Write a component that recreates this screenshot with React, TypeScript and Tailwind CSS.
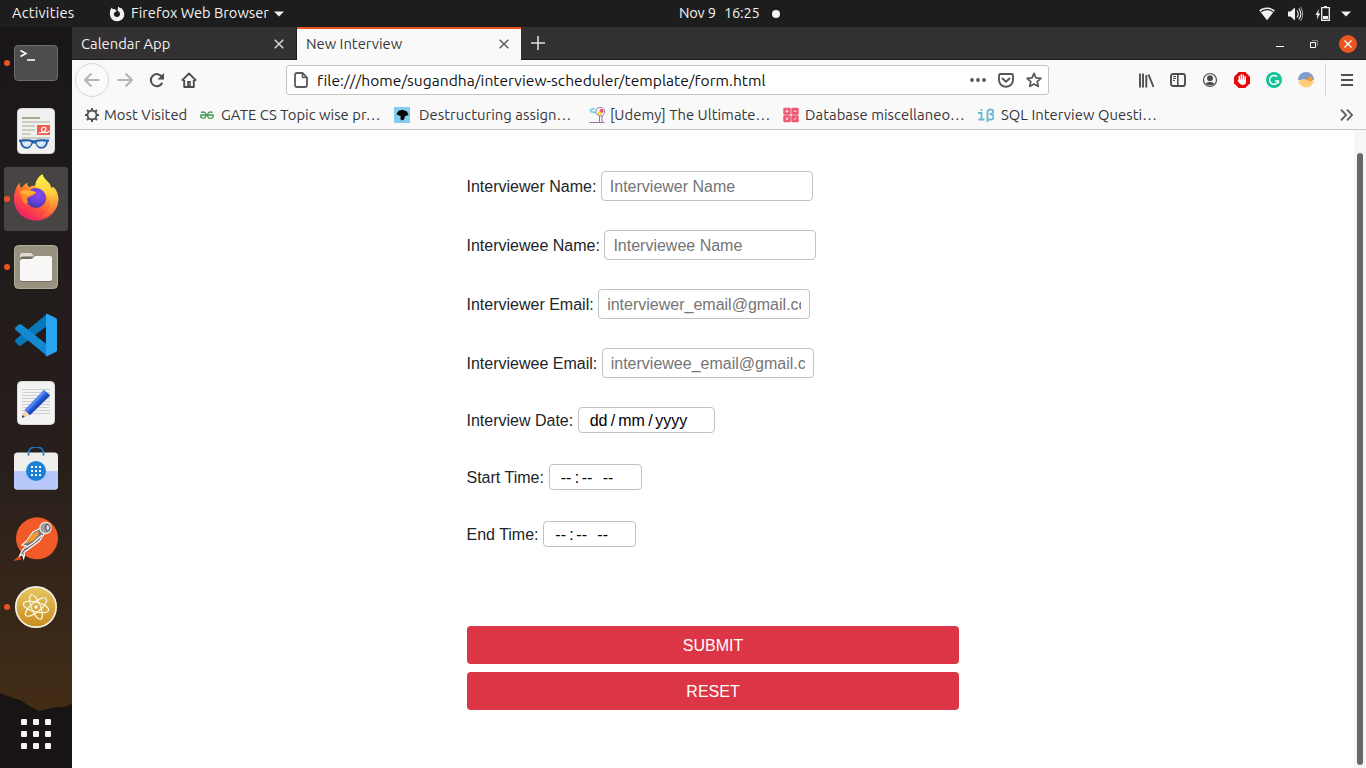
import React from "react";

type DrawProps = { box: string; w: number; h: number; children: React.ReactNode; className?: string };

function Draw({ box, w, h, children, className = "" }: DrawProps) {
  return (
    <svg viewBox={box} width={w} height={h} className={"block shrink-0 " + className} fill="none">
      {children}
    </svg>
  );
}

function TopBar() {
  return (
    <header className="flex h-[27px] shrink-0 items-center bg-[#1d1d1d] text-[14.667px] leading-[25px] text-[#f2f2f2]">
      <span className="ml-3 w-[97px] whitespace-nowrap pb-[2px] tracking-[0.22px]">Activities</span>
      <Draw box="0 0 16 16" w={16} h={16}>
        <path d="M1.2 4.5 2.6 1.6l1.3 1.7L5.8 3l2 2.3-1.7.8-1.4 1.6C4.8 10 6.3 11 8 11c2 0 3.2-1.5 3-3.3-.2-1.500-1.300-2.300-2.500-2.900L9.200.6l2 1.700 1.300-.2 1.800 2.600c2 3.700.8 7.400-2.200 9.400-3.400 2.200-8 1.300-10-2C.8 9.900.6 7 1.200 4.500Z" fill="#f2f2f2" />
      </Draw>
      <span className="ml-[6px] w-[143px] whitespace-nowrap pb-[2px]">Firefox Web Browser</span>
      <Draw box="0 0 10 6" w={10} h={6}><path d="M0 .5h10L5 5.500Z" fill="#f2f2f2" /></Draw>
      <span className="ml-[395px] w-[45px] whitespace-nowrap pb-[2px] tracking-[-0.200px]">Nov 9</span>
      <span className="w-[48px] whitespace-nowrap pb-[2px] tracking-[-0.250px]">16:25</span>
      <span className="size-2 rounded-full bg-[#f2f2f2]" />
      <div className="mr-[15px] ml-auto flex items-center">
        <Draw box="1259 6 16 14" w={16} h={14}>
          <path d="M1259.200 9.300c4.500-3.700 11.100-3.700 15.600 0L1267 19.300Z" fill="#f2f2f2" />
          <path d="M1261 10.700c3.500-2.800 8.500-2.800 12 0" stroke="#1d1d1d" strokeWidth="1.100" />
        </Draw>
        <Draw box="1287 5 17 16" w={17} h={16} className="ml-3">
          <path d="M1288 10.500h2.500l4.500-4v13l-4.500-4h-2.500Z" fill="#f2f2f2" />
          <path d="M1297 9.500q2.500 3.500 0 7M1298.800 7.500q4.200 5.500 0 11" stroke="#f2f2f2" strokeWidth="1.100" />
          <path d="M1300.500 6q4.500 7 0 14" stroke="#a0a0a0" strokeWidth="1" />
        </Draw>
        <Draw box="1315 4 16 17" w={16} h={17} className="ml-[11px]">
          <path d="M1319 8l-3.500 6h2l-.7 4.500 3.500-6h-2Z" fill="#f2f2f2" />
          <path d="M1321.700 6.700h7.600v12.600h-7.600Z" stroke="#f2f2f2" strokeWidth="1.300" />
          <path d="M1324 5h3v1.500h-3ZM1323 15h5v3h-5Z" fill="#f2f2f2" />
        </Draw>
        <Draw box="0 0 10 6" w={10} h={6} className="ml-[10px]"><path d="M0 .5h10L5 5.500Z" fill="#f2f2f2" /></Draw>
      </div>
    </header>
  );
}

function DockItem({ running = false, active = false, children }: { running?: boolean; active?: boolean; children: React.ReactNode }) {
  return (
    <div className={"relative flex size-16 shrink-0 items-center justify-center rounded-[3px] " + (active ? "bg-[#484444]" : "")}>
      {running && <span className="absolute top-[29px] left-0 size-[6px] rounded-full bg-[#e95420]" />}
      {children}
    </div>
  );
}

function Dock() {
  return (
    <nav className="relative flex w-[72px] shrink-0 flex-col items-center gap-1 bg-linear-to-b from-[#19161a] via-[#281f1c] via-60% to-[#4a3012] pt-1">
      <svg className="absolute bottom-0 left-0" width="72" height="76" viewBox="0 0 72 76" fill="none">
        <path d="M0 1 10 5 20 8 31 15 39 19 56 15 63 15 72 12V76H0Z" fill="#191414" />
      </svg>
      <DockItem running>
        <Draw box="13 44 46 38" w={46} h={38}>
          <rect x="14.500" y="45.500" width="43" height="35" rx="3.500" fill="#4d4d4d" stroke="#6d6d6d" />
          <path d="M20.500 50.500 26 53.500l-5.500 3" stroke="#fff" strokeWidth="1.500" />
          <path d="M27 60h8" stroke="#fff" strokeWidth="1.600" />
        </Draw>
      </DockItem>
      <DockItem>
        <Draw box="17 108 38 46" w={38} h={46}>
          <rect x="17.500" y="108.500" width="37" height="45" rx="4" fill="#f0f0ef" stroke="#d8d8d6" />
          <path d="M22 118h18" stroke="#aaa68f" strokeWidth="2" />
          <path d="M22 122h28M22 126h13M22 130h13M22 134h9M22 138h28" stroke="#c3c0b4" strokeWidth="1.600" />
          <rect x="37" y="125" width="13" height="10" fill="#f25c4c" />
          <path d="M38.500 133c3.500 0 8-2 7.500-4.500-.5-2-4.500-1.500-4.500 1 0 4 5 4 8 1.500" stroke="#fff" strokeWidth="1.200" />
          <path d="M19 139.800c4-.8 11-.8 14 .5h2c3-1.300 10-1.300 14-.5v1.700l-1.200.8c-.8 7.700-10.300 9-12.300 1.200h-3c-2 7.800-11.500 6.500-12.300-1.200l-1.200-.8Z" fill="#205fae" />
          <path d="M21.800 141.800c3-.7 7-.7 9.700.2-.5 6.500-8.700 7-9.700-.2ZM36.500 142c2.700-.9 6.700-.9 9.700-.2-1 7.200-9.200 6.700-9.700.2Z" fill="#d3e3f2" />
          <path d="m24.500 145.500 4-3.500M39 145.500l4-3.500" stroke="#fff" />
        </Draw>
      </DockItem>
      <DockItem running active>
        <Draw box="12 173 48 50" w={48} h={50} className="-mt-1">
          <defs>
            <linearGradient id="ffBody" x1="50" y1="178" x2="22" y2="218" gradientUnits="userSpaceOnUse">
              <stop offset="0" stopColor="#fff04a" /><stop offset=".35" stopColor="#ffa52b" /><stop offset=".65" stopColor="#ff553c" /><stop offset="1" stopColor="#ee1b68" />
            </linearGradient>
            <linearGradient id="ffTail" x1="46" y1="175" x2="50" y2="214" gradientUnits="userSpaceOnUse">
              <stop offset="0" stopColor="#fff44f" /><stop offset=".5" stopColor="#ffcf3b" /><stop offset="1" stopColor="#ff6a3a" />
            </linearGradient>
            <radialGradient id="ffGlobe" cx="38" cy="196" r="13" gradientUnits="userSpaceOnUse">
              <stop offset="0" stopColor="#8a4cf5" /><stop offset=".6" stopColor="#6a40d8" /><stop offset="1" stopColor="#453ba8" />
            </radialGradient>
          </defs>
          <path d="M20 183.500c-.3 3 .2 4.500 1.500 5.500 2-2.500 3.800-4.200 6-5.500-.3 2 .2 3.500 1.500 4.500 12-4 25-2 27.500 7l2 4c0 13-10 22.500-22.500 22.500S13.500 212 14 199c.1-6 2.500-12 6-15.500Z" fill="url(#ffBody)" />
          <path d="M42.500 175c1 4 4 6 6.500 9 1.500 1.800 2 3.500 2 5l2.500-1c3.500 3.500 5 8 4.700 12-.7 9-7 16.500-16.200 18 6-4 9-10 7-18-2-6-9-9-13.500-11.500-.8-6 2.500-10.500 7-13.500Z" fill="url(#ffTail)" />
          <circle cx="36" cy="199" r="10" fill="url(#ffGlobe)" />
          <path d="M19.500 193c4-2.500 8-2 11.500-1 2 .7 4 1 5 1.500-1 2.500-4 3.500-7 4.500-2.500 1-2 4-.5 5-2 1-3 1.500-2 3-4-2-5-8-7-13Z" fill="#ff8a2b" />
          <path d="M19.500 193c4-3 10-2.500 16.500.3-2 2-5 2.200-8 3.200" fill="#ffb135" />
        </Draw>
      </DockItem>
      <DockItem running>
        <Draw box="13 244 46 46" w={46} h={46}>
          <rect x="14.500" y="245.500" width="43" height="43" rx="4" fill="#979180" stroke="#b3ad9c" />
          <path d="M20 255q0-2 2-2h9l3 3v8H20Z" fill="#dedacf" />
          <rect x="20" y="256.500" width="32" height="25.500" rx="2.500" fill="#726d60" />
          <path d="M20 261q0-2 2-2h8.500q2 0 3.500-2 .8-1 2-1h14q2 0 2 2v21q0 2-2 2H22q-2 0-2-2Z" fill="#f9f8f6" />
        </Draw>
      </DockItem>
      <DockItem>
        <Draw box="14 313 44 44" w={44} h={44}>
          <path d="M15.500 339.500q-1 1.500.2 2.800l2.700 2.900q1.600 1 3 .1L47 326v-12Z" fill="#0877b9" />
          <path d="M15.500 330q-1-1.500.2-2.800l2.700-2.500q1.600-1 3-.1L47 344.500V356Z" fill="#1289d0" />
          <path d="M45.500 314q1-.3 2 .1l8.300 4q1.200.7 1.200 2v30q0 1.300-1.200 2l-8.300 4q-1 .4-2 .1l.5-.7V314.500Z" fill="#29a4ee" />
        </Draw>
      </DockItem>
      <DockItem>
        <Draw box="17 380 38 46" w={38} h={46}>
          <rect x="17.500" y="381.500" width="37" height="43" rx="4" fill="#f3f3f3" stroke="#dadada" />
          <path d="M22 389.500h28M22 392.500h28M22 395.500h28M22 398.500h28M22 401.500h28M22 404.500h28M22 407.500h28M22 410.500h28M22 413.500h28" stroke="#cfcfcf" />
          <path d="m24.500 410-2.500 8 8-3.300Z" fill="#f4d4b2" />
          <path d="m22.800 415-1 3 3-1.200Z" fill="#333" />
          <path d="m24.500 410 19.500-20 6 5-20 20Z" fill="#2e63df" />
          <path d="m25 410 19-20 2 1.600-19 19.800Z" fill="#5789f3" />
          <path d="m28 413.500 19-19.800 3 2L30 415Z" fill="#1f4cba" />
        </Draw>
      </DockItem>
      <DockItem>
        <Draw box="13 449 46 48" w={46} h={48}>
          <path d="M28.500 456v-1c0-8.200 15-8.200 15 0v1" stroke="#1b78cb" strokeWidth="1.700" />
          <rect x="14" y="454.500" width="44" height="37" rx="3.500" fill="#eeeeed" />
          <path d="M14 473h44v15.500q0 3-3 3H17q-3 0-3-3Z" fill="#b7c9fa" />
          <path d="M28.500 457.500v-3M43.500 457.500v-3" stroke="#1b78cb" strokeWidth="1.700" />
          <circle cx="36" cy="473" r="10" fill="#1c80d6" />
          <path d="M31 469h2m2 0h2m2 0h2M31 473h2m2 0h2m2 0h2M31 477h2m2 0h2m2 0h2" stroke="#fff" strokeWidth="2" />
        </Draw>
      </DockItem>
      <DockItem>
        <Draw box="12 515 48 48" w={48} h={48}>
          <circle cx="37" cy="538.300" r="21" fill="#f15a29" />
          <path d="m13 561 7-6 1.500 4.500Z" fill="#dc4a20" />
          <path d="M40 528.500 33 532l-6.500 9L22 545l4 .8-4 5-2.500 5 3-1.300 1.200 4 .8-3.500-.5-2.500 7.500-5.500 8-6 4.500-7Z" fill="#77757b" stroke="#fff" strokeWidth="1.100" />
          <path d="m38.500 531-5.500 2.500-8 10.500 8.500-3.500 5-5.500Z" fill="#f59a2d" />
          <path d="m42 535-9 8-7 4.500" stroke="#fff" strokeWidth="1.100" />
          <circle cx="45.500" cy="528" r="5.600" fill="#9d9ca1" stroke="#ececec" strokeWidth="1.200" />
          <path d="M46 524.500q4.500 0 4 3.500-.5 3.500-3 3.500-2-3 -1-7Z" fill="#d8d8d8" stroke="#333" strokeWidth=".9" />
        </Draw>
      </DockItem>
      <DockItem running>
        <Draw box="14 585 44 44" w={44} h={44}>
          <defs>
            <linearGradient id="atomFill" x1="0" y1="0" x2="0" y2="1">
              <stop offset="0" stopColor="#e8c765" /><stop offset="1" stopColor="#c98c1d" />
            </linearGradient>
          </defs>
          <circle cx="36" cy="607" r="20.200" fill="url(#atomFill)" stroke="#f1eee4" strokeWidth="1.700" />
          <g stroke="#f7f8df" strokeWidth="1.200">
            <ellipse cx="36" cy="607" rx="13" ry="4.800" transform="rotate(15 36 607)" />
            <ellipse cx="36" cy="607" rx="13" ry="4.600" transform="rotate(69 36 607)" />
            <ellipse cx="36" cy="607" rx="13.200" ry="4.800" transform="rotate(-40 36 607)" />
          </g>
          <circle cx="36" cy="607" r="1.700" fill="#f7f8df" />
        </Draw>
      </DockItem>
      <div className="relative mt-auto mb-[19px] grid grid-cols-3 gap-[6px]">
        {Array.from({ length: 9 }, (_, i) => (
          <span key={i} className="size-[6px] rounded-[1px] bg-[#f2f2f2]" />
        ))}
      </div>
    </nav>
  );
}

function CloseGlyph({ color }: { color: string }) {
  return (
    <Draw box="0 0 10 10" w={10} h={10}><path d="m.7.7 8.600 8.600M9.300.7.7 9.300" stroke={color} strokeWidth="1.500" /></Draw>
  );
}

function TabStrip() {
  return (
    <div className="flex h-[33px] shrink-0 border-b border-[#1b1a1b] bg-[#333031] text-[14.800px]">
      <div className="flex w-[225px] items-center justify-between border-r border-[#1b1a1b] pt-[2px] pr-3 pl-[9px] text-[#f0f0f0]">
        <span className="whitespace-nowrap">Calendar App</span>
        <CloseGlyph color="#d6d6d6" />
      </div>
      <div className="-mb-px flex w-[224px] items-center justify-between border-t-2 border-[#e95420] bg-[#f9f9fa] pr-3 pb-px pl-[9px] text-[#3a3a3c]">
        <span className="whitespace-nowrap">New Interview</span>
        <CloseGlyph color="#5c5c5c" />
      </div>
      <div className="flex items-center pl-[10px]">
        <Draw box="0 0 14 14" w={14} h={14}><path d="M7 0v14M0 7h14" stroke="#dedede" strokeWidth="1.600" /></Draw>
      </div>
      <div className="mr-[9px] ml-auto flex items-center pt-[2px]">
        <Draw box="0 0 8 8" w={8} h={8}><path d="M0 6.500h8" stroke="#fff" /></Draw>
        <Draw box="0 0 8 8" w={8} h={8} className="ml-[26px]">
          <path d="M2 .5h5.500V6" stroke="#858385" /><path d="M.5 2.500h5v5h-5Z" stroke="#fff" />
        </Draw>
        <span className="ml-[21px] flex size-[18px] items-center justify-center rounded-full bg-[#e95420]">
          <Draw box="0 0 8 8" w={8} h={8}><path d="m.5.5 7 7m0-7-7 7" stroke="#fff" strokeWidth="1.300" /></Draw>
        </span>
      </div>
    </div>
  );
}

function Toolbar() {
  return (
    <div className="flex h-10 shrink-0 items-center pl-[3px]">
      <span className="flex size-[34px] items-center justify-center rounded-full border border-[#d5d5d6] bg-[#fafafa]">
        <Draw box="0 0 16 16" w={16} h={16}><path d="M15.500 8H1.500M7.500 1.500 1 8l6.500 6.500" stroke="#b4b4b5" strokeWidth="2" /></Draw>
      </span>
      <Draw box="0 0 16 16" w={16} h={16} className="ml-2"><path d="M.5 8h14M8.500 1.500 15 8l-6.500 6.500" stroke="#b4b4b5" strokeWidth="2" /></Draw>
      <Draw box="0 0 16 16" w={16} h={16} className="ml-4">
        <path d="M13.300 10.700A6 6 0 1 1 13 5" stroke="#4d4d4f" strokeWidth="2" /><path d="M15 1v6.500H8.500Z" fill="#4d4d4f" />
      </Draw>
      <Draw box="0 0 16 16" w={16} h={16} className="ml-4">
        <path d="M.8 8.700 8 1.500l7.200 7.200M3.200 8v7h9.600V8" stroke="#4d4d4f" strokeWidth="1.900" strokeLinejoin="round" />
        <path d="M6.200 15V9h3.600v6" fill="#4d4d4f" /><path d="M8 12h1" stroke="#f9f9fa" />
      </Draw>
      <div className="ml-[89px] flex h-[30px] w-[763px] items-center rounded-[3px] border border-[#c3c3c4] bg-white pl-[7px]">
        <Draw box="0 0 14 16" w={14} h={16}>
          <path d="M3 1h5.500L13 5.500V13q0 2-2 2H3q-2 0-2-2V3q0-2 2-2Z" stroke="#5a5a5c" strokeWidth="1.800" /><path d="M8.500 1v4.500H13" stroke="#5a5a5c" strokeWidth="1.500" />
        </Draw>
        <span className="ml-[9px] w-[653px] pt-[2px] text-[15.600px] whitespace-nowrap tracking-[0.018px] text-[#111]">file:///home/sugandha/interview-scheduler/template/form.html</span>
        <Draw box="0 0 16 4" w={16} h={4}>
          <circle cx="2" cy="2" r="1.900" fill="#57575a" /><circle cx="8" cy="2" r="1.900" fill="#57575a" /><circle cx="14" cy="2" r="1.900" fill="#57575a" />
        </Draw>
        <Draw box="0 0 16 15" w={16} h={15} className="ml-3">
          <path d="M2.500 1h11Q15 1 15 2.500V7c0 9-14 9-14 0V2.500Q1 1 2.500 1Z" stroke="#57575a" strokeWidth="1.900" />
          <path d="m4.500 5.500 3.500 3.300 3.500-3.300" stroke="#57575a" strokeWidth="1.900" strokeLinecap="round" strokeLinejoin="round" />
        </Draw>
        <Draw box="0 0 16 16" w={16} h={16} className="ml-3">
          <path d="m8 1.300 2 4.500 4.900.5-3.700 3.300 1.100 4.800L8 11.900l-4.300 2.500 1.100-4.800L1.100 6.300 6 5.800Z" stroke="#57575a" strokeWidth="1.700" strokeLinejoin="round" />
        </Draw>
      </div>
      <Draw box="1138 73 16 15" w={16} h={15} className="ml-[89px]">
        <path d="M1140 73.500v14M1143 73.500v14M1146.300 75v12.500M1148.500 74.500l5 12.500" stroke="#4d4d4f" strokeWidth="1.900" />
      </Draw>
      <Draw box="0 0 16 14" w={16} h={14} className="ml-4">
        <rect x="1" y="1" width="14" height="12" rx="2" stroke="#4d4d4f" strokeWidth="1.900" />
        <path d="M7.800 1v12" stroke="#4d4d4f" strokeWidth="1.600" /><path d="M3 3.500h3M3 5.500h3M3 7.500h2" stroke="#4d4d4f" />
      </Draw>
      <Draw box="0 0 16 16" w={16} h={16} className="ml-4">
        <circle cx="8" cy="8" r="6.500" stroke="#4d4d4f" strokeWidth="1.200" /><circle cx="8" cy="6.200" r="3" fill="#4d4d4f" />
        <path d="M3.500 11.500q2-2 4.500-1.500 2.500-.5 4.500 1.500-1.500 2-4.500 2t-4.500-2Z" fill="#4d4d4f" />
      </Draw>
      <Draw box="0 0 16 16" w={16} h={16} className="ml-4">
        <path d="M4.700 0h6.600L16 4.700v6.600L11.300 16H4.700L0 11.300V4.700Z" fill="#e20a0d" />
        <path d="M5.300 9V4.500M7.300 8V2.700M9.300 8V3.200M11.200 9V4.800" stroke="#fff" strokeWidth="1.500" strokeLinecap="round" />
        <path d="M4.600 7.500h7.400V10c0 3-4.500 4-6.200 1.500L3.500 9Z" fill="#fff" />
      </Draw>
      <Draw box="0 0 16 16" w={16} h={16} className="ml-4">
        <circle cx="8" cy="8" r="8" fill="#15c39a" /><path d="M11 4.700A4.400 4.400 0 1 0 12.300 9H9M12.400 8.300v3" stroke="#fff" strokeWidth="1.500" />
      </Draw>
      <Draw box="0 0 16 16" w={16} h={16} className="ml-4">
        <path d="M0 8a8 8 0 0 1 16 0Z" fill="#829dcb" /><path d="M.2 9C4 6.500 8 6.500 12 9l4-.5a8 8 0 0 1-15.800.5Z" fill="#fdce7b" /><circle cx="12.300" cy="7" r="2.400" fill="#f69a32" />
      </Draw>
      <span className="ml-[11px] h-[34px] w-px bg-[#dadadb]" />
      <Draw box="0 0 12 12" w={12} h={12} className="ml-[15px]"><path d="M0 1h12M0 6h12M0 11h12" stroke="#4d4d4f" strokeWidth="2" /></Draw>
    </div>
  );
}

function Bookmarks() {
  return (
    <div className="flex h-[30px] shrink-0 items-center border-b border-[#c8c8c9] pt-px pl-3 text-[14.800px] whitespace-nowrap text-[#363638]">
      <Draw box="0 0 16 16" w={16} h={16}>
        <circle cx="8" cy="8" r="4.500" stroke="#505052" strokeWidth="1.800" />
        <path d="M8 1v3M8 12v3M1 8h3M12 8h3M3 3l2 2M11 11l2 2M13 3l-2 2M5 11l-2 2" stroke="#505052" strokeWidth="1.900" />
      </Draw>
      <span className="ml-1 w-[95px]">Most Visited</span>
      <Draw box="0 0 16 10" w={16} h={10}>
        <path d="M2 2.300Q7.500 1 7 5.500 6 9 3 8 1 6.500 2 5H14q1 2-1.500 3.200Q9 9 8.500 5.500 8.500 1 13.500 2.300" stroke="#3d9650" strokeWidth="1.300" />
      </Draw>
      <span className="ml-[6px] w-[173px] tracking-[0.03px]">GATE CS Topic wise pr…</span>
      <Draw box="0 0 16 16" w={16} h={16}>
        <path d="M0 0h16v16H0Z" fill="#83cdeb" /><path d="m2.300 7.200 2.400-3.500 4-.9 4.300 1.700 1.600 3.500-3.700 1.200-.8 3.300-2.300 1-1.500-1.800.5-2.500Z" fill="#050505" />
      </Draw>
      <span className="ml-[9px] w-[170px] tracking-[0.05px]">Destructuring assign…</span>
      <Draw box="0 0 16 16" w={16} h={16}>
        <path d="m.5 3 5-1.500M1 4.500l5 1" stroke="#5cd5df" strokeWidth="1.500" />
        <path d="M7 2.500C9-1 16 0 15.500 5S11 9.500 10 8.500M10 8.500 6.500 6l1-3.500M10.500 8.500v7M13 8v7.500M.5 15.500h15" stroke="#9874a7" strokeWidth="1" />
        <circle cx="12.500" cy="4" r="2" fill="#ee5367" /><path d="m8 6 2-2 3 2-1.500 3Z" fill="#f6d842" />
      </Draw>
      <span className="ml-[5px] w-[173px] tracking-[0.03px]">[Udemy] The Ultimate…</span>
      <Draw box="0 0 16 16" w={16} h={16}>
        <rect x=".3" y=".8" width="7.400" height="6.900" rx="1.200" fill="#ef5672" /><rect x="8.300" y=".8" width="7.400" height="6.900" rx="1.200" fill="#ef5672" />
        <rect x=".3" y="8.300" width="7.400" height="6.900" rx="1.200" fill="#ef5672" /><rect x="8.300" y="8.300" width="7.400" height="6.900" rx="1.200" fill="#ef5672" />
        <path d="M2.500 4.200h3M4 2.700v3M10.500 4.200h3M2.700 10.500l2.600 2.500m0-2.500L2.700 13M10.700 13l2.600-2.500" stroke="#fff" strokeWidth=".9" />
      </Draw>
      <span className="ml-[6px] w-[173px] tracking-[0.05px]">Database miscellaneo…</span>
      <Draw box="0 0 16 16" w={16} h={16}>
        <path d="M0 6h3.500v6M.5 12.500h6M3.500 2v2" stroke="#69b8cb" strokeWidth="1.800" />
        <path d="M9.500 15V5q0-2.500 3-2.500T15 5q0 2.200-3.500 2.200 4 0 4 2.800 0 2.700-3 2.700-2 0-3-1" stroke="#69b8cb" strokeWidth="1.800" />
      </Draw>
      <span className="ml-[7px] tracking-[0.06px]">SQL Interview Questi…</span>
      <Draw box="0 0 14 12" w={14} h={12} className="mr-3 ml-auto"><path d="m1 .7 5 5.300-5 5.300M7 .7 12 6l-5 5.300" stroke="#57575a" strokeWidth="1.800" /></Draw>
    </div>
  );
}

function TextRow({ label, placeholder, type = "text" }: { label: string; placeholder: string; type?: string }) {
  return (
    <label className="flex h-[30px] items-center gap-[4.500px]">
      <span className="pt-[2px]">{label}</span>
      <input type={type} placeholder={placeholder} className="h-[30px] w-[212px] rounded-[4px] border border-[#c1c1c1] bg-white px-2 pt-[2px] placeholder:text-[#757575]" />
    </label>
  );
}

function TimeRow({ label }: { label: string }) {
  return (
    <div className="mt-[31px] flex h-[26px] items-center gap-[4.800px]">
      <span className="pt-[2px]">{label}</span>
      <div className="flex h-[26px] w-[93px] items-center rounded-[4px] border border-[#c1c1c1] pt-[2px] pl-[11px] text-black">
        <span className="w-[14px]">--</span>
        <span className="w-[7px]">:</span>
        <span className="w-[21px]">--</span>
        <span>--</span>
      </div>
    </div>
  );
}

function InterviewForm() {
  return (
    <form className="ml-[394.500px] flex w-[492px] flex-col pt-[41px] text-[16px] leading-6 text-[#212529] [font-family:'Liberation_Sans',Arial,sans-serif]">
      <div className="flex flex-col gap-[29px]">
        <TextRow label="Interviewer Name:" placeholder="Interviewer Name" />
        <TextRow label="Interviewee Name:" placeholder="Interviewee Name" />
        <TextRow label="Interviewer Email:" placeholder="interviewer_email@gmail.com" type="email" />
        <TextRow label="Interviewee Email:" placeholder="interviewee_email@gmail.com" type="email" />
      </div>
      <div className="mt-[29px] flex h-[26px] items-center gap-[4.500px]">
        <span className="pt-[2px]">Interview Date:</span>
        <div className="flex h-[26px] w-[137px] items-center rounded-[4px] border border-[#c1c1c1] pt-[2px] pl-[11px] text-black">
          <span className="w-[21px]">dd</span>
          <span className="w-[7.500px]">/</span>
          <span className="w-[30px]">mm</span>
          <span className="w-[7px]">/</span>
          <span>yyyy</span>
        </div>
      </div>
      <TimeRow label="Start Time:" />
      <TimeRow label="End Time:" />
      <button type="button" className="mt-[79px] h-[38px] rounded-[4px] bg-[#dc3545] pt-[2px] pl-px text-white">SUBMIT</button>
      <button type="button" className="mt-2 h-[38px] rounded-[4px] bg-[#dc3545] pt-[2px] pl-px text-white">RESET</button>
    </form>
  );
}

export default function App() {
  return (
    <div className="flex h-[768px] w-[1366px] flex-col overflow-hidden bg-white [font-family:'Ubuntu','Noto_Sans',sans-serif]">
      <TopBar />
      <div className="flex min-h-0 flex-1">
        <Dock />
        <div className="flex min-w-0 flex-1 flex-col bg-[#f9f9fa]">
          <TabStrip />
          <Toolbar />
          <Bookmarks />
          <main className="flex min-h-0 flex-1 justify-between bg-white">
            <InterviewForm />
            <div className="flex w-3 flex-col items-center bg-[#f6f6f6] pt-[23px]">
              <span className="h-[612px] w-[6px] rounded-full bg-[#686868]" />
            </div>
          </main>
        </div>
      </div>
    </div>
  );
}
